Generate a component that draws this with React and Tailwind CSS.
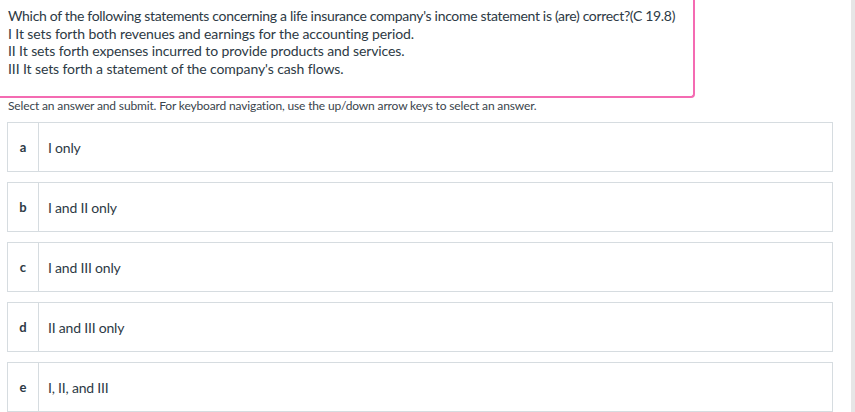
const options = [
  { letter: 'a', text: 'I only' },
  { letter: 'b', text: 'I and II only' },
  { letter: 'c', text: 'I and III only' },
  { letter: 'd', text: 'II and III only' },
  { letter: 'e', text: 'I, II, and III' },
];

export default function App() {
  return (
    <div className="relative h-[412px] w-[855px] overflow-hidden bg-white text-[#2d3a45]" style={{ fontFamily: 'Lato, "Open Sans", sans-serif' }}>
      {/* question box, only right and bottom edges show */}
      <div className="w-[695px] whitespace-nowrap border-r-2 border-b-2 border-[#f46bb2] rounded-br-[4px] pl-2 pt-[7px] pb-[19px] text-[14px] leading-[17.6px] tracking-[-0.1px]">
        <p className="tracking-[-0.32px]">Which of the following statements concerning a life insurance company's income statement is (are) correct?(C 19.8)</p>
        <p>I It sets forth both revenues and earnings for the accounting period.</p>
        <p>II It sets forth expenses incurred to provide products and services.</p>
        <p>III It sets forth a statement of the company's cash flows.</p>
      </div>

      <p className="pl-2 text-[12px] leading-[15px] tracking-[-0.15px] text-[#3a444c]">
        Select an answer and submit. For keyboard navigation, use the up/down arrow keys to select an answer.
      </p>

      <div className="ml-[7px] mt-[9px] flex w-[826px] flex-col gap-[10px]">
        {options.map((o) => (
          <div key={o.letter} className="flex h-[50px] border border-[#d6dce0] bg-white">
            <div className="flex w-[31px] items-center justify-center border-r border-[#d6dce0] text-[13px] font-bold">
              {o.letter}
            </div>
            <div className="flex items-center pl-[9px] text-[14px] tracking-[-0.2px]">{o.text}</div>
          </div>
        ))}
      </div>

      {/* scrollbar strip */}
      <div className="absolute right-0 top-0 h-full w-[4px] bg-[#e6e6e6]" />
    </div>
  );
}
